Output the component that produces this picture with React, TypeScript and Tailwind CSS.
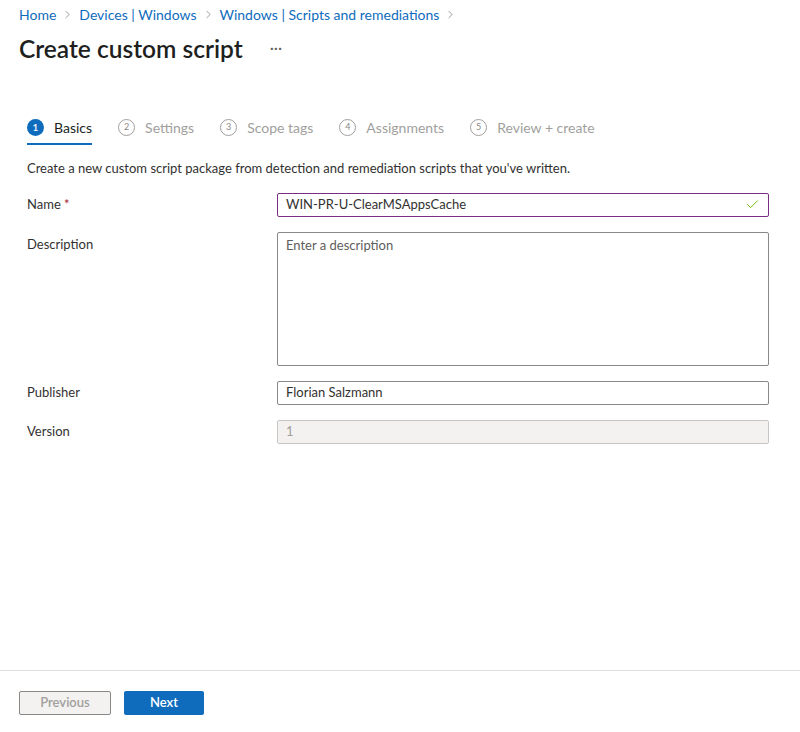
import { Check, ChevronRight } from "lucide-react";

const steps = [
  { n: 1, label: "Basics", active: true },
  { n: 2, label: "Settings" },
  { n: 3, label: "Scope tags" },
  { n: 4, label: "Assignments" },
  { n: 5, label: "Review + create" },
];

const crumbs = ["Home", "Devices | Windows", "Windows | Scripts and remediations"];

export default function App() {
  return (
    <div
      className="w-[800px] h-[732px] bg-white flex flex-col text-[#323130]"
      style={{ fontFamily: "'Segoe UI', Lato, 'Noto Sans', sans-serif" }}
    >
      <div className="flex-1 flex flex-col">
        {/* Breadcrumb */}
        <div className="flex items-center pl-[19px] pt-[6px] h-[22px] text-[14px] text-[#0f6cbd]">
          {crumbs.map((c) => (
            <span key={c} className="flex items-center">
              <span>{c}</span>
              <ChevronRight size={13} className="text-[#8a8886] mx-[5px]" strokeWidth={1.5} />
            </span>
          ))}
        </div>

        {/* Title */}
        <div className="flex items-center pl-[19px] mt-[10px] h-[34px]">
          <h1 className="text-[24.5px] font-semibold text-[#201f1e]">Create custom script</h1>
          <span className="ml-[27px] text-[#605e5c] text-[16px] leading-none -mt-[4px]">···</span>
        </div>

        {/* Steps */}
        <div className="flex items-center pl-[27px] mt-[50px] gap-[26px]">
          {steps.map((s) => (
            <div key={s.n} className="flex flex-col">
              <div className="flex items-center gap-[10px] h-[22px]">
                <span
                  className={
                    s.active
                      ? "w-[17px] h-[17px] rounded-full bg-[#0f6cbd] text-white text-[10px] font-semibold flex items-center justify-center"
                      : "w-[17px] h-[17px] rounded-full border border-[#a19f9d] text-[#8a8886] text-[9px] flex items-center justify-center"
                  }
                >
                  {s.n}
                </span>
                <span className={s.active ? "text-[14px] text-[#201f1e]" : "text-[14px] text-[#a19f9d]"}>
                  {s.label}
                </span>
              </div>
              <div className={s.active ? "h-[2px] mt-[5px] bg-[#0f6cbd]" : "h-[2px] mt-[5px]"} />
            </div>
          ))}
        </div>

        <p className="pl-[27px] mt-[14px] text-[13px]">
          Create a new custom script package from detection and remediation scripts that you've written.
        </p>

        {/* Form */}
        <div className="flex flex-col pl-[27px] pr-[31px] mt-[14px] gap-[15px] text-[13px]">
          <div className="flex items-center">
            <label className="w-[250px]">
              Name <span className="text-[#a4262c]">*</span>
            </label>
            <div className="flex-1 h-[24px] border border-[#7a2e83] rounded-[2px] flex items-center px-[8px]">
              <span className="flex-1">WIN-PR-U-ClearMSAppsCache</span>
              <Check size={15} className="text-[#6bb700]" strokeWidth={1.5} />
            </div>
          </div>

          <div className="flex items-start">
            <label className="w-[250px] pt-[3px]">Description</label>
            <div className="flex-1 h-[134px] border border-[#8a8886] rounded-[2px] px-[8px] pt-[3px] text-[#605e5c]">
              Enter a description
            </div>
          </div>

          <div className="flex items-center">
            <label className="w-[250px]">Publisher</label>
            <div className="flex-1 h-[24px] border border-[#8a8886] rounded-[2px] flex items-center px-[8px]">
              Florian Salzmann
            </div>
          </div>

          <div className="flex items-center">
            <label className="w-[250px]">Version</label>
            <div className="flex-1 h-[24px] border border-[#c8c6c4] bg-[#f3f2f1] rounded-[2px] flex items-center px-[8px] text-[#a19f9d]">
              1
            </div>
          </div>
        </div>
      </div>

      {/* Footer */}
      <div className="h-[62px] border-t border-[#e1dfdd] flex items-start pl-[19px] pt-[20px] gap-[13px] text-[13px] font-semibold">
        <button className="w-[92px] h-[24px] border border-[#8a8886] bg-[#f3f2f1] text-[#a19f9d] rounded-[2px]">
          Previous
        </button>
        <button className="w-[80px] h-[24px] bg-[#0f6cbd] text-white rounded-[2px]">Next</button>
      </div>
    </div>
  );
}
